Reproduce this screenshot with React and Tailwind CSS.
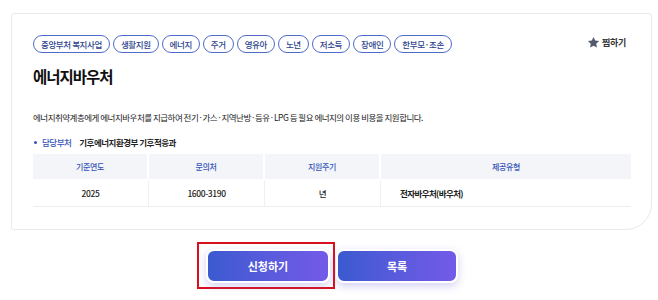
import React from "react";

const tags = ["중앙부처 복지사업", "생활지원", "에너지", "주거", "영유아", "노년", "저소득", "장애인", "한부모·조손"];

export default function App() {
  return (
    <div className="w-[658px] h-[300px] bg-white overflow-hidden" style={{ fontFamily: '"Noto Sans CJK KR", "Noto Sans", sans-serif' }}>
      <div className="ml-[11px] mt-[13px] w-[641px] h-[217px] border border-[#e7e9ed] rounded-[3px] rounded-br-[26px] bg-white pl-[21px] pr-[20px] pt-[21px]">
        <div className="flex items-center justify-between">
          <div className="flex gap-[3px]">
            {tags.map((t) => (
              <span key={t} className="h-[18px] px-[7px] flex items-center rounded-full border border-[#4f6bc9] text-[8.5px] font-medium tracking-[-0.4px] text-[#2c3f8c] leading-none">
                {t}
              </span>
            ))}
          </div>
          <div className="flex items-center gap-[2px] mr-[5px] mt-[-3px]">
            <svg width="13" height="13" viewBox="0 0 24 24">
              <path d="M12 1.8l3.1 6.6 7.2.9-5.3 5 1.4 7.1L12 17.9l-6.4 3.5 1.4-7.1-5.3-5 7.2-.9z" fill="#535a70" />
            </svg>
            <span className="text-[9px] font-bold text-[#333] tracking-[-0.3px]">찜하기</span>
          </div>
        </div>
        <h1 className="mt-[11px] text-[15.5px] font-bold text-[#111] leading-[24px] tracking-[-1px]">에너지바우처</h1>
        <p className="mt-[22px] text-[8.5px] tracking-[-0.5px] text-[#222] leading-[14px]">
          에너지취약계층에게 에너지바우처를 지급하여 전기·가스·지역난방·등유·LPG 등 필요 에너지의 이용 비용을 지원합니다.
        </p>
        <div className="mt-[11px] flex items-center text-[8.5px] tracking-[-0.5px] leading-[14px]">
          <span className="w-[3px] h-[3px] rounded-full bg-[#3553b8] ml-[1px] mr-[5px]" />
          <span className="text-[#3553b8] font-medium">담당부처</span>
          <span className="ml-[8px] font-bold text-[#222]">기후에너지환경부 기후적응과</span>
        </div>
        <div className="mt-[5px] w-[598px]">
          <div className="grid grid-cols-[116px_116px_116px_250px] h-[26px] bg-[#f3f5f9] border-b border-white text-[8px] font-medium tracking-[-0.3px] text-[#3553b8]">
            <div className="flex items-center justify-center border-r-2 border-white">기준연도</div>
            <div className="flex items-center justify-center border-r-2 border-white">문의처</div>
            <div className="flex items-center justify-center border-r-2 border-white">지원주기</div>
            <div className="flex items-center justify-center">제공유형</div>
          </div>
          <div className="grid grid-cols-[116px_116px_116px_250px] h-[27px] border-b border-[#eceef2] text-[8.5px] font-medium tracking-[-0.4px] text-[#222]">
            <div className="flex items-center justify-center border-r border-[#eef0f3]">2025</div>
            <div className="flex items-center justify-center border-r border-[#eef0f3]">1600-3190</div>
            <div className="flex items-center justify-center border-r border-[#eef0f3]">년</div>
            <div className="flex items-center pl-[19px] font-bold tracking-[-0.6px]">전자바우처(바우처)</div>
          </div>
        </div>
      </div>
      <div className="flex gap-[6px] pl-[206px] mt-[19px]">
        <div className="relative">
          <div className="absolute left-[-9px] top-[-7px] w-[138px] h-[47px] border-2 border-[#d8101c]" />
          <button className="relative w-[124px] h-[34px] rounded-[8px] border-2 border-white bg-gradient-to-r from-[#3a5ad0] to-[#735ae8] text-white text-[11px] font-bold shadow-[0_3px_8px_rgba(110,100,220,0.3)]">
            신청하기
          </button>
        </div>
        <button className="w-[122px] h-[34px] rounded-[8px] border-2 border-white bg-gradient-to-r from-[#3a5ad0] to-[#735ae8] text-white text-[11px] font-bold shadow-[0_3px_8px_rgba(110,100,220,0.3)]">
          목록
        </button>
      </div>
    </div>
  );
}
